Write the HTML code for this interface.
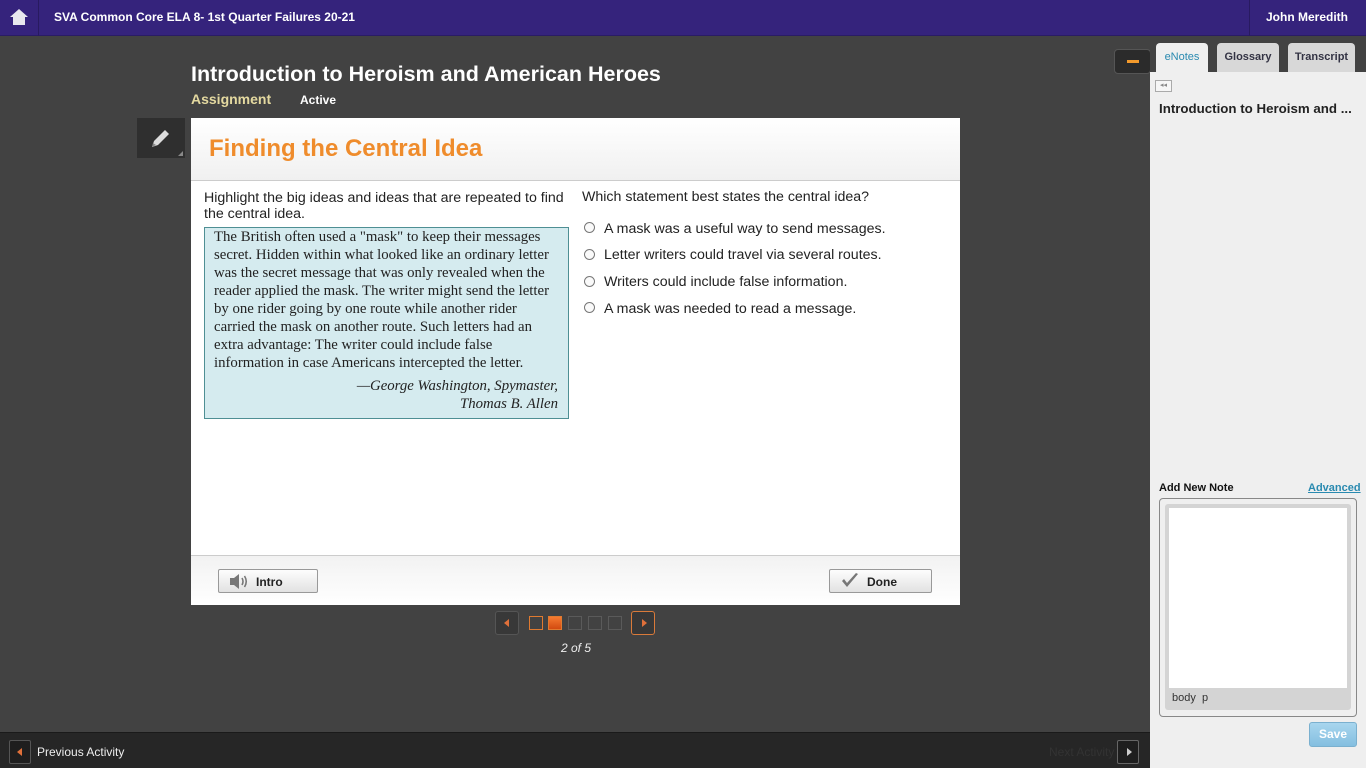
<!DOCTYPE html>
<html><head><meta charset="utf-8"><style>
*{margin:0;padding:0;box-sizing:border-box}
body{width:1366px;height:768px;overflow:hidden;background:#424242;font-family:"Liberation Sans",sans-serif;position:relative}
.abs{position:absolute}
#top{left:0;top:0;width:1366px;height:36px;background:#35237c;border-bottom:1px solid #2a1c64}
#top .t{left:54px;top:10px;color:#fff;font-weight:bold;font-size:12px}
#top .u{right:18px;top:10px;color:#fff;font-weight:bold;font-size:12px}
#right{left:1150px;top:36px;width:216px;height:732px;background:#efefef}
.tab{top:43px;height:29px;border-radius:4px 4px 0 0;background:#d8d8d8;font-size:11px;font-weight:bold;color:#334;text-align:center;line-height:28px}
#bottom{left:0;top:732px;width:1150px;height:36px;background:#262626;border-top:1px solid #1a1a1a}
.card{left:191px;top:118px;width:769px;height:487px;background:#fff}
.radio{width:11px;height:11px;border:1px solid #777;border-radius:50%;background:#fafafa}
.opt{font-size:14.2px;color:#222}
.btn{height:24px;border:1px solid #999;border-radius:2px;background:linear-gradient(#fdfdfd,#e2e2e2);font-size:12px;font-weight:bold;color:#222}
.sq{top:616px;width:14px;height:14px;border:1px solid #5a5a5a}
</style></head><body>
<div id="top" class="abs">
 <div class="abs" style="left:38px;top:0;width:1px;height:36px;background:#281a60"></div>
 <svg class="abs" style="left:9px;top:8px" width="20" height="18" viewBox="0 0 20 18"><path d="M10 1L1 9h3v8h12V9h3z" fill="#e8e8ee"/></svg>
 <div class="abs t">SVA Common Core ELA 8- 1st Quarter Failures 20-21</div>
 <div class="abs" style="left:1249px;top:0;width:1px;height:36px;background:#281a60"></div>
 <div class="abs u">John Meredith</div>
</div>
<div class="abs" style="left:191px;top:62px;color:#fff;font-size:21.5px;font-weight:bold">Introduction to Heroism and American Heroes</div>
<div class="abs" style="left:191px;top:91px;color:#e4d9a0;font-size:14px;font-weight:bold">Assignment</div>
<div class="abs" style="left:300px;top:93px;color:#fff;font-size:12px;font-weight:bold">Active</div>
<div class="abs" style="left:137px;top:118px;width:48px;height:40px;background:#2f2f2f"><svg class="abs" style="left:12px;top:9px" width="24" height="22" viewBox="0 0 24 22"><path d="M3 20l2-6L16 3l4 4L9 18z" fill="#ddd"/><path d="M3 20l1-4 3 2z" fill="#888"/></svg><div class="abs" style="right:2px;bottom:2px;width:0;height:0;border-left:5px solid transparent;border-bottom:5px solid #888"></div></div>
<div class="abs" style="left:1114px;top:49px;width:37px;height:25px;background:#2b2b2b;border:1px solid #555;border-radius:4px"><div class="abs" style="left:12px;top:10px;width:12px;height:3px;background:#f39a2c"></div></div>
<div class="abs card">
 <div class="abs" style="left:0;top:0;width:769px;height:63px;background:linear-gradient(#fff,#f0f0f0);border-bottom:1px solid #ccc"></div>
 <div class="abs" style="left:18px;top:17px;font-size:24px;font-weight:bold;color:#ef8c2c">Finding the Central Idea</div>
 <div class="abs" style="left:13px;top:72px;width:372px;font-size:14.2px;color:#222;line-height:16px">Highlight the big ideas and ideas that are repeated to find the central idea.</div>
 <div class="abs" style="left:13px;top:109px;width:365px;height:192px;background:#d5ebef;border:1px solid #4e8f94;padding:0 10px 0 9px;font-family:'Liberation Serif',serif;font-size:14.8px;line-height:18px;color:#222">The British often used a "mask" to keep their messages secret. Hidden within what looked like an ordinary letter was the secret message that was only revealed when the reader applied the mask. The writer might send the letter by one rider going by one route while another rider carried the mask on another route. Such letters had an extra advantage: The writer could include false information in case Americans intercepted the letter.<div style="text-align:right;font-style:italic;margin-top:5px">—George Washington, Spymaster,<br>Thomas B. Allen</div></div>
 <div class="abs" style="left:391px;top:71px;font-size:14.2px;color:#222">Which statement best states the central idea?</div>
 <div class="abs radio" style="left:393px;top:104px"></div><div class="abs opt" style="left:413px;top:103px">A mask was a useful way to send messages.</div>
 <div class="abs radio" style="left:393px;top:131px"></div><div class="abs opt" style="left:413px;top:129px">Letter writers could travel via several routes.</div>
 <div class="abs radio" style="left:393px;top:158px"></div><div class="abs opt" style="left:413px;top:156px">Writers could include false information.</div>
 <div class="abs radio" style="left:393px;top:184px"></div><div class="abs opt" style="left:413px;top:183px">A mask was needed to read a message.</div>
 <div class="abs" style="left:0;top:437px;width:769px;height:50px;background:linear-gradient(#f2f2f2,#fff);border-top:1px solid #ccc"></div>
 <div class="abs btn" style="left:27px;top:451px;width:100px"><svg class="abs" style="left:10px;top:3px" width="20" height="17" viewBox="0 0 20 17"><path d="M1 5h4l5-4v15l-5-4H1z" fill="#777"/><path d="M13 5q2 3.5 0 7M15.5 3q3.5 5.5 0 11" stroke="#777" stroke-width="1.6" fill="none"/></svg><span class="abs" style="left:37px;top:5px">Intro</span></div>
 <div class="abs btn" style="left:638px;top:451px;width:103px"><svg class="abs" style="left:11px;top:3px" width="18" height="16" viewBox="0 0 18 16"><path d="M1 8l5 6L17 1l-2-1L6 10 3 6z" fill="#777"/></svg><span class="abs" style="left:37px;top:5px">Done</span></div>
</div>
<div class="abs" style="left:495px;top:611px;width:24px;height:24px;border:1px solid #555;border-radius:3px;background:#383838"><div class="abs" style="left:8px;top:7px;border-right:5px solid #e0703a;border-top:4px solid transparent;border-bottom:4px solid transparent"></div></div>
<div class="abs sq" style="left:529px;border-color:#e07a30"></div>
<div class="abs sq" style="left:548px;background:linear-gradient(#f57a30,#d24a10);border-color:#e07a30"></div>
<div class="abs sq" style="left:568px"></div><div class="abs sq" style="left:588px"></div><div class="abs sq" style="left:608px"></div>
<div class="abs" style="left:631px;top:611px;width:24px;height:24px;border:1px solid #d97a3a;border-radius:3px;background:#383838"><div class="abs" style="left:10px;top:7px;border-left:5px solid #e0703a;border-top:4px solid transparent;border-bottom:4px solid transparent"></div></div>
<div class="abs" style="left:561px;top:641px;color:#eee;font-size:12px;font-style:italic">2 of 5</div>
<div id="right" class="abs"></div>
<div class="abs" style="left:1150px;top:36px;width:216px;height:36px;background:#424242"></div>
<div class="abs tab" style="left:1156px;width:52px;height:30px;background:#efefef;color:#2a8ab0;font-weight:normal">eNotes</div>
<div class="abs tab" style="left:1217px;width:62px">Glossary</div>
<div class="abs tab" style="left:1288px;width:67px">Transcript</div>
<div class="abs" style="left:1155px;top:80px;width:17px;height:12px;border:1px solid #aaa;background:#f6f6f6;font-size:7px;color:#888;text-align:center;line-height:10px">◂◂</div>
<div class="abs" style="left:1159px;top:101px;font-size:13.3px;font-weight:bold;color:#222">Introduction to Heroism and ...</div>
<div class="abs" style="left:1159px;top:482px;font-size:11px;font-weight:bold;color:#111">Add New Note</div>
<div class="abs" style="left:1308px;top:482px;font-size:11px;font-weight:bold;color:#2a8ab0;text-decoration:underline">Advanced</div>
<div class="abs" style="left:1159px;top:498px;width:198px;height:219px;border:1px solid #888;border-radius:4px;background:#efefef"></div>
<div class="abs" style="left:1165px;top:504px;width:186px;height:206px;background:#d4d4d4;border-radius:3px"></div>
<div class="abs" style="left:1169px;top:508px;width:178px;height:180px;background:#fff"></div>
<div class="abs" style="left:1172px;top:692px;font-size:11px;color:#333">body&nbsp;&nbsp;p</div>
<div class="abs" style="left:1309px;top:722px;width:48px;height:25px;background:linear-gradient(#a8d6ee,#84bfe0);border:1px solid #7ab0cf;border-radius:3px;color:#fff;font-size:12px;font-weight:bold;text-align:center;line-height:23px">Save</div>
<div id="bottom" class="abs">
 <div class="abs" style="left:9px;top:7px;width:22px;height:24px;border:1px solid #555;border-radius:2px;background:#1e1e1e"><div class="abs" style="left:7px;top:7px;border-right:5px solid #e0703a;border-top:4px solid transparent;border-bottom:4px solid transparent"></div></div>
 <div class="abs" style="left:37px;top:12px;color:#eee;font-size:12px">Previous Activity</div>
 <div class="abs" style="left:1049px;top:12px;color:#333;font-size:12px">Next Activity</div>
 <div class="abs" style="left:1117px;top:7px;width:22px;height:24px;border:1px solid #666;border-radius:2px;background:#1e1e1e"><div class="abs" style="left:9px;top:7px;border-left:5px solid #ccc;border-top:4px solid transparent;border-bottom:4px solid transparent"></div></div>
</div>
</body></html>
